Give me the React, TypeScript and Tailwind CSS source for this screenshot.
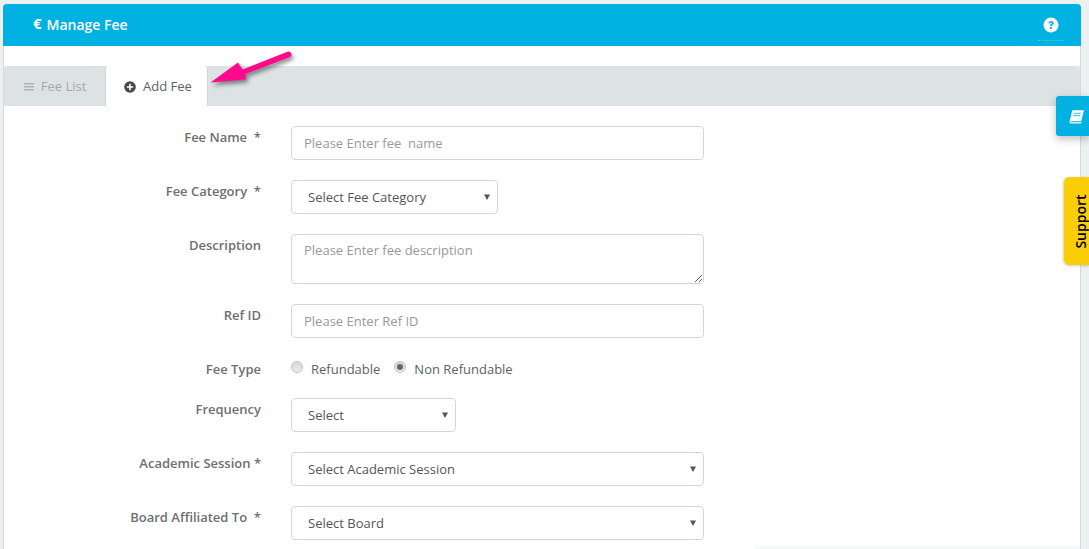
import { ReactNode } from "react";

const labelCls = "w-[257px] shrink-0 text-right text-[13px] leading-[20px] font-semibold text-[#6b7073]";
const fieldCls =
  "h-[34px] rounded-[4px] border border-[#cfd9dc] bg-white text-[13px] text-[#555] outline-none";

const Row = ({ label, star, children, className = "" }: { label: string; star?: string; children: ReactNode; className?: string }) => (
  <div className={`flex items-start ${className}`}>
    <div className={`${labelCls} pt-[1px]`}>
      {label}
      {star}
    </div>
    <div className="ml-[30px]">{children}</div>
  </div>
);

const Select = ({ text, width }: { text: string; width: string }) => (
  <div className={`relative ${width}`}>
    <select className={`${fieldCls} w-full appearance-none pl-[16px] pr-6 pt-[2px]`}>
      <option>{text}</option>
    </select>
    <svg className="pointer-events-none absolute right-[8px] top-[14px]" width="6" height="6" viewBox="0 0 6 6">
      <path d="M0 0.5h6L3 6z" fill="#555" />
    </svg>
  </div>
);

const Radio = ({ checked }: { checked?: boolean }) => (
  <span className="relative -top-[1px] flex h-[12px] w-[12px] items-center justify-center rounded-full border border-[#c2c2c2] bg-gradient-to-b from-[#d6d6d6] to-[#eeeeee]">
    {checked && <span className="h-[6px] w-[6px] rounded-full bg-[#666]" />}
  </span>
);

export default function App() {
  return (
    <div
      className="relative h-[549px] w-[1089px] overflow-hidden bg-[#ecf0f1] pl-[3px] pt-[4px] text-[13px]"
      style={{ fontFamily: '"Open Sans", sans-serif' }}
    >
      <div className="h-[600px] w-[1078px] rounded-t-[4px] border-x border-[#d5dbdd] bg-white">
        <div className="-mx-[1px] flex h-[42px] items-center justify-between rounded-t-[4px] bg-[#00b1e2] pl-[30px] pr-[17px] text-white">
          <div className="relative -top-[1px] flex items-center gap-[5px] text-[14px] font-semibold">
            <span className="relative -top-[1px] text-[15px] font-bold">€</span>
            <span>Manage Fee</span>
          </div>
          <div className="flex h-[32px] w-[26px] items-center justify-center border-b border-dotted border-[#7fd8f1]/60">
            <svg width="16" height="16" viewBox="0 0 16 16">
              <circle cx="8" cy="8" r="7.5" fill="#fff" />
              <path d="M5.4 6.2c.2-1.5 1.3-2.3 2.7-2.3 1.5 0 2.6.9 2.6 2.2 0 1.1-.7 1.5-1.3 1.9-.5.3-.6.6-.6 1.1H7c0-1 .4-1.6 1-2 .5-.3.8-.5.8-.9s-.3-.7-.8-.7c-.6 0-.9.3-1 1z" fill="#00b1e2" />
              <rect x="7" y="10" width="1.9" height="1.9" fill="#00b1e2" />
            </svg>
          </div>
        </div>

        <div className="mt-[20px] flex h-[40px] rounded-t-[3px] bg-[#dde3e5]">
          <div className="flex w-[101px] items-center justify-center gap-[7px] pt-[1px] pl-[1px] text-[#a3a8aa]">
            <svg width="10" height="8" viewBox="0 0 10 8" fill="#a3a8aa">
              <rect width="10" height="1.2" y="0.2" />
              <rect width="10" height="1.2" y="3.2" />
              <rect width="10" height="1.2" y="6.2" />
            </svg>
            <span>Fee List</span>
          </div>
          <div className="flex h-[40px] w-[103px] items-center justify-center gap-[7px] rounded-t-[3px] border-x border-[#cfd6d8] bg-white pt-[1px] pl-[3px] text-[#5c6366]">
            <svg width="12" height="12" viewBox="0 0 12 12">
              <circle cx="6" cy="6" r="5.8" fill="#43494c" />
              <path d="M5.2 2.8h1.6v2.4h2.4v1.6H6.8v2.4H5.2V6.8H2.8V5.2h2.4z" fill="#fff" />
            </svg>
            <span>Add Fee</span>
          </div>
        </div>

        <div className="flex flex-col gap-[20px] pt-[20px]">
          <Row label="Fee Name" star={"\u00a0 *"}>
            <input className={`${fieldCls} w-[413px] px-[12px] placeholder:text-[#999]`} placeholder="Please Enter fee  name" />
          </Row>
          <Row label="Fee Category" star={"\u00a0 *"}>
            <Select text="Select Fee Category" width="w-[207px]" />
          </Row>
          <Row label="Description">
            <textarea
              className="block h-[50px] w-[413px] rounded-[4px] border border-[#cfd9dc] bg-white px-[12px] py-[6px] text-[13px] text-[#555] outline-none placeholder:text-[#999]"
              placeholder="Please Enter fee description"
            />
          </Row>
          <Row label="Ref ID">
            <input className={`${fieldCls} w-[413px] px-[12px] placeholder:text-[#999]`} placeholder="Please Enter Ref ID" />
          </Row>
          <Row label="Fee Type" className="h-[20px]">
            <div className="flex h-[20px] items-center text-[#5c6366]">
              <Radio />
              <span className="relative top-[2px] ml-[8px]">Refundable</span>
              <span className="ml-[14px]"><Radio checked /></span>
              <span className="relative top-[2px] ml-[8px]">Non Refundable</span>
            </div>
          </Row>
          <Row label="Frequency">
            <Select text="Select" width="w-[165px]" />
          </Row>
          <Row label="Academic Session" star=" *">
            <Select text="Select Academic Session" width="w-[413px]" />
          </Row>
          <Row label="Board Affiliated To" star={"\u00a0 *"}>
            <Select text="Select Board" width="w-[413px]" />
          </Row>
        </div>
      </div>

      {/* annotation arrow */}
      <svg className="absolute left-[205px] top-[48px] overflow-visible drop-shadow-[2px_3px_2px_rgba(0,0,0,0.45)]" width="95" height="40" viewBox="0 0 95 40">
        <path d="M5.5 34.5 L33 14.5 L37.5 21.5 L83 3.5 Q85.5 3 86.5 6 Q87 8 85 9 L40.5 26 L41 31.5 Z" fill="#ff0a8c" />
      </svg>

      {/* bottom edge shade */}
      <div className="absolute bottom-0 left-[755px] h-[5px] w-[325px] bg-gradient-to-b from-transparent to-[#f4f5f5]" />

      {/* side tabs */}
      <div className="absolute left-[1056px] top-[96px] flex h-[40px] w-[33px] items-center justify-center rounded-l-[3px] bg-[#00b1e2] pl-[7px] shadow-[0_3px_8px_rgba(0,0,0,0.25)]">
        <svg width="17" height="15" viewBox="0 0 16 14">
          <path d="M4 1h11l-2.6 10.5H1.6z" fill="#fff" />
          <path d="M1.6 11.5c-.5 1.4.2 2 1.2 2h9.6l.5-1H3c-.5 0-.7-.4-.5-1z" fill="#fff" />
          <path d="M5.5 4h6.5M5 6.2h6.5" stroke="#00b1e2" strokeWidth="0.8" />
        </svg>
      </div>
      <div className="absolute left-[1063px] top-[177px] flex h-[88px] w-[26px] items-center justify-center rounded-l-[6px] border-l border-[#f1e3a0] bg-[#fbcd07] pl-[7px] shadow-[0_1px_3px_rgba(0,0,0,0.2)]">
        <span className="rotate-[-90deg] text-[14px] font-semibold text-black">Support</span>
      </div>
    </div>
  );
}
